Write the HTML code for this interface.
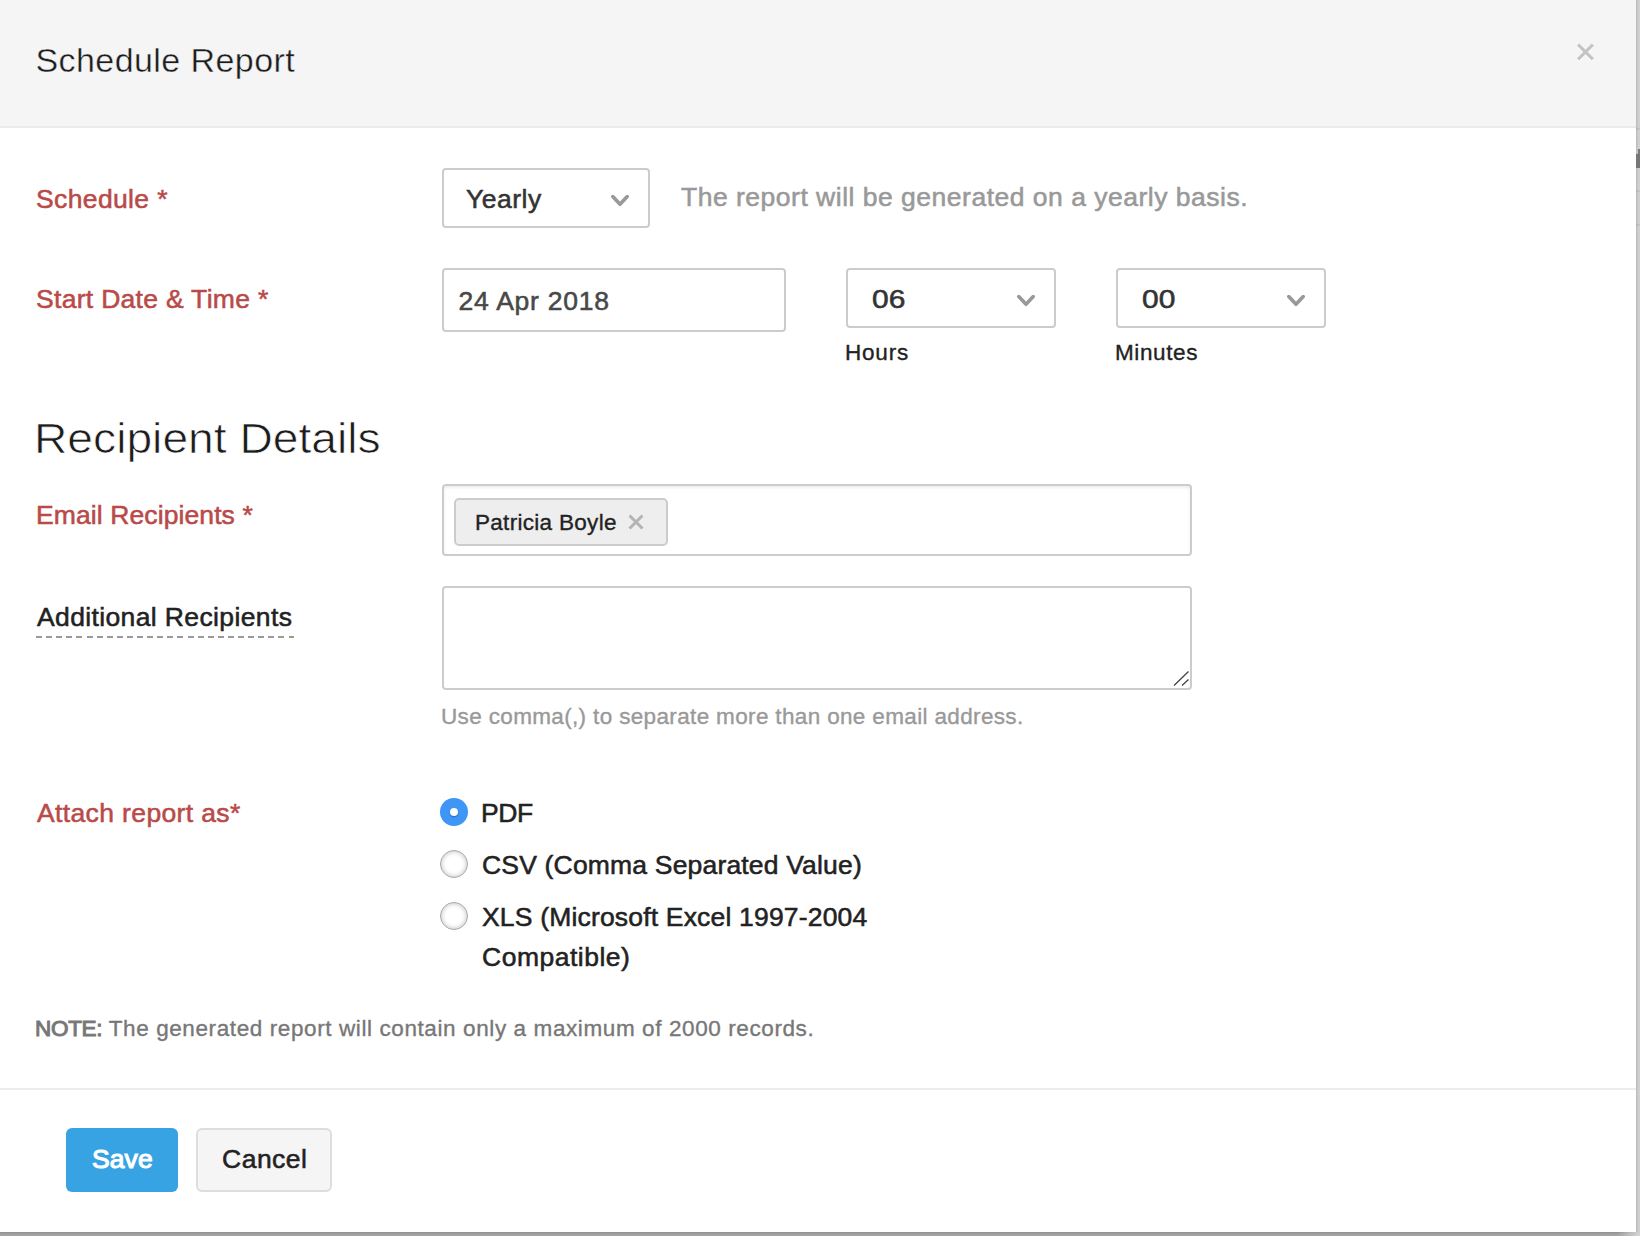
<!DOCTYPE html>
<html lang="en">
<head>
<meta charset="utf-8">
<title>Schedule Report</title>
<style>
*{box-sizing:border-box;margin:0;padding:0}
html,body{width:1640px;height:1236px;overflow:hidden}
body{background:#d3d3d3;font-family:"Liberation Sans",Arial,sans-serif;color:#222;position:relative}
.modal{position:absolute;left:0;top:0;width:1636px;height:1232px;background:#fff;}
.hdr{position:absolute;left:0;top:0;width:1636px;height:128px;background:#f5f5f5;border-bottom:2px solid #ebebeb}
.t{position:absolute;white-space:nowrap;line-height:1}
.title{left:35.5px;top:43px;font-size:34px;color:#1c1c1c;-webkit-text-stroke:.4px #f5f5f5;letter-spacing:.42px}
.lbl{left:36px;font-size:26.5px;color:#b94a48;-webkit-text-stroke:.55px currentColor}
.f26{font-size:26.5px;-webkit-text-stroke:.55px currentColor}
.f22{font-size:22.5px;-webkit-text-stroke:.35px currentColor}
.box{position:absolute;background:#fff;border:2px solid #ccc;border-radius:4px}
.help{color:#999}
.chev{position:absolute}
.foot{position:absolute;left:0;top:1088px;width:1636px;height:2px;background:#ececec}
.btn{position:absolute;top:1128px;height:64px;border-radius:6px}
.save{left:66px;width:112px;background:#38a3e3}
.cancel{left:196px;width:136px;background:#f5f5f5;border:2px solid #ddd}
.radio{position:absolute;left:440px;width:28px;height:28px;border-radius:50%}
.radio.on{background:#3e97f7;}
.radio.on:after{content:"";position:absolute;left:10px;top:10px;width:8px;height:8px;border-radius:50%;background:#fff;box-shadow:0 1px 1.5px rgba(0,40,110,.45)}
.radio.off{background:#fff;border:1.4px solid #a6a6a6;box-shadow:inset 0 0 4px 1px rgba(0,0,0,.20)}
</style>
</head>
<body>
<div class="modal">
  <div class="hdr"></div>
  <div class="t title">Schedule Report</div>
  <svg class="chev" style="left:1575px;top:42px" width="21" height="21" viewBox="0 0 21 21"><path d="M3.1 3.9 L17.9 18.7 M17.9 3.9 L3.1 18.7" stroke="#fff" stroke-width="3.2" fill="none"/><path d="M3.1 2.6 L17.9 17.4 M17.9 2.6 L3.1 17.4" stroke="#c4c4c4" stroke-width="3.2" fill="none"/></svg>

  <div class="t lbl" style="top:186px;letter-spacing:.37px">Schedule *</div>
  <div class="box" style="left:442px;top:168px;width:208px;height:60px"></div>
  <div class="t f26" style="left:466px;top:186px;color:#333;letter-spacing:.5px">Yearly</div>
  <svg class="chev" style="left:609px;top:193px" width="22" height="16" viewBox="0 0 22 16"><path d="M3.75 3.6 L11 11.3 L18.25 3.6" stroke="#999" stroke-width="3.6" fill="none" stroke-linecap="round" stroke-linejoin="round"/></svg>
  <div class="t f26 help" style="left:681px;top:184px;letter-spacing:.5px">The report will be generated on a yearly basis.</div>

  <div class="t lbl" style="top:286px;letter-spacing:.3px">Start Date &amp; Time *</div>
  <div class="box" style="left:442px;top:268px;width:344px;height:64px"></div>
  <div class="t f26" style="left:458.5px;top:288px;color:#484848;letter-spacing:.75px">24 Apr 2018</div>
  <div class="box" style="left:846px;top:268px;width:210px;height:60px"></div>
  <div class="t f26" style="left:872px;top:286px;color:#333;transform:scaleX(1.13);transform-origin:0 0">06</div>
  <svg class="chev" style="left:1015px;top:293px" width="22" height="16" viewBox="0 0 22 16"><path d="M3.75 3.6 L11 11.3 L18.25 3.6" stroke="#999" stroke-width="3.6" fill="none" stroke-linecap="round" stroke-linejoin="round"/></svg>
  <div class="box" style="left:1116px;top:268px;width:210px;height:60px"></div>
  <div class="t f26" style="left:1142px;top:286px;color:#333;transform:scaleX(1.13);transform-origin:0 0">00</div>
  <svg class="chev" style="left:1285px;top:293px" width="22" height="16" viewBox="0 0 22 16"><path d="M3.75 3.6 L11 11.3 L18.25 3.6" stroke="#999" stroke-width="3.6" fill="none" stroke-linecap="round" stroke-linejoin="round"/></svg>
  <div class="t f22" style="left:845px;top:342px;letter-spacing:.8px">Hours</div>
  <div class="t f22" style="left:1115px;top:342px;letter-spacing:.6px">Minutes</div>

  <div class="t" style="left:34.3px;top:418px;font-size:42px;color:#1c1c1c;-webkit-text-stroke:.7px #fff;transform:scaleX(1.1);transform-origin:0 0">Recipient Details</div>

  <div class="t lbl" style="top:502px;letter-spacing:.1px">Email Recipients *</div>
  <div class="box" style="left:442px;top:484px;width:750px;height:72px;box-shadow:inset 0 2px 3px rgba(0,0,0,.07)"></div>
  <div class="box" style="left:454px;top:498px;width:214px;height:48px;background:#eee;border-radius:5px"></div>
  <div class="t f22" style="left:475px;top:511.5px;letter-spacing:.3px">Patricia Boyle</div>
  <svg class="chev" style="left:627px;top:513px" width="18" height="18" viewBox="0 0 18 18"><path d="M2.5 2.5 L15.5 15.5 M15.5 2.5 L2.5 15.5" stroke="#b4b4b4" stroke-width="3" fill="none"/></svg>

  <div class="t f26" style="left:37px;top:604px;color:#222;letter-spacing:.37px">Additional Recipients</div>
  <div style="position:absolute;left:36px;top:636px;width:258px;height:2px;background:repeating-linear-gradient(90deg,#999 0,#999 6px,transparent 6px,transparent 10.1px)"></div>
  <div class="box" style="left:442px;top:586px;width:750px;height:104px"></div>
  <svg class="chev" style="left:1172px;top:670px" width="18" height="18" viewBox="0 0 18 18"><path d="M2 15.5 L16.5 1.5 M10 15.5 L16.5 9.5" stroke="#444" stroke-width="1.3" fill="none"/></svg>
  <div class="t f22 help" style="left:441px;top:706px;letter-spacing:.35px">Use comma(,) to separate more than one email address.</div>

  <div class="t lbl" style="top:800px;letter-spacing:.37px;margin-left:1px">Attach report as*</div>
  <div class="radio on" style="top:798px"></div>
  <div class="radio off" style="top:850px"></div>
  <div class="radio off" style="top:902px"></div>
  <div class="t f26" style="left:481px;top:800px;letter-spacing:-.4px">PDF</div>
  <div class="t f26" style="left:482px;top:852px;letter-spacing:.18px">CSV (Comma Separated Value)</div>
  <div class="t f26" style="left:482px;top:904px;letter-spacing:.18px">XLS (Microsoft Excel 1997-2004</div>
  <div class="t f26" style="left:482px;top:944px;letter-spacing:.5px">Compatible)</div>

  <div class="t f22" style="left:35px;top:1018px;color:#777;letter-spacing:.6px"><b style="font-weight:400;-webkit-text-stroke:1px currentColor;letter-spacing:-.3px">NOTE:</b> The generated report will contain only a maximum of 2000 records.</div>

  <div class="foot"></div>
  <div class="btn save"></div>
  <div class="t f26" style="left:92px;top:1146px;color:#fff;-webkit-text-stroke:1.1px #fff;letter-spacing:.1px">Save</div>
  <div class="btn cancel"></div>
  <div class="t f26" style="left:222px;top:1146px;letter-spacing:.5px">Cancel</div>
</div>
<div style="position:absolute;left:1636px;top:0;width:4px;height:1236px;background:linear-gradient(90deg,#bcbcbc 0,#c6c6c6 1.5px,#cfcfcf 2.5px,#d2d2d2 4px)"></div>
<div style="position:absolute;left:1636px;top:128px;width:4px;height:2px;background:rgba(0,0,0,.06)"></div>
<div style="position:absolute;left:1636px;top:190px;width:4px;height:2px;background:rgba(0,0,0,.06)"></div>
<div style="position:absolute;left:1636px;top:224px;width:4px;height:2px;background:rgba(0,0,0,.06)"></div>
<div style="position:absolute;left:1638px;top:149px;width:2px;height:6px;background:#7d7d7d"></div>
<div style="position:absolute;left:1636px;top:154px;width:4px;height:14px;background:#777"></div>
<div style="position:absolute;left:0;top:1232px;width:1640px;height:4px;background:linear-gradient(90deg,rgba(212,212,212,0) 1617px,rgba(212,212,212,.95) 1638px),linear-gradient(#8d8d8d 0,#9c9c9c 1.5px,#a2a2a2 2.5px,#a3a3a3 4px)"></div>
</body>
</html>
